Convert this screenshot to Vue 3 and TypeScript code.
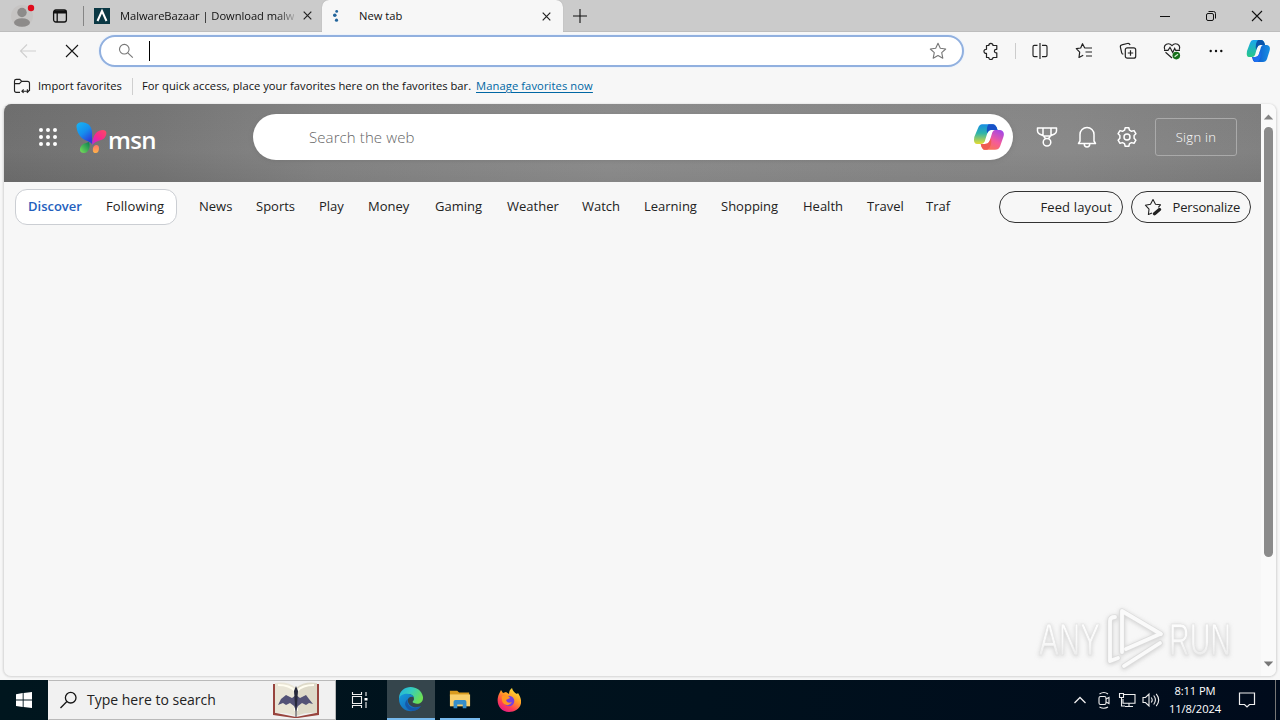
<script setup lang="ts">
interface Topic { label: string; width: number }

const topics: Topic[] = [
  { label: 'News', width: 33 },
  { label: 'Sports', width: 39 },
  { label: 'Play', width: 25 },
  { label: 'Money', width: 43 },
  { label: 'Gaming', width: 48 },
  { label: 'Weather', width: 51 },
  { label: 'Watch', width: 38 },
  { label: 'Learning', width: 53 },
  { label: 'Shopping', width: 58 },
  { label: 'Health', width: 40 },
  { label: 'Travel', width: 35 },
  { label: 'Traf', width: 25 },
]
const dots = [0, 1, 2, 3, 4, 5, 6, 7, 8]
</script>

<template>
  <div class="screen">
    <header class="tabs">
      <div class="profile">
        <svg width="26" height="24" viewBox="0 0 26 24"><circle cx="13" cy="12" r="11" fill="#c6c4c3"/><circle cx="13" cy="8.5" r="4.7" fill="#8d8b8a"/><ellipse cx="13" cy="18.5" rx="8" ry="4.3" fill="#8d8b8a"/><circle cx="22" cy="4" r="3.2" fill="#e00b1c"/></svg>
      </div>
      <div class="workspaces">
        <svg width="16" height="16" viewBox="0 0 16 16" fill="none" stroke="#111" stroke-width="1.3"><rect x="1.6" y="2" width="12.8" height="12" rx="2.2"/><path d="M2 4h12" stroke-width="3"/><path d="M5.2 4v10"/></svg>
      </div>
      <i class="tabsep"></i>
      <div class="tab old">
        <svg width="16" height="16" viewBox="0 0 16 16"><path fill="#0b3844" d="M0 0h16v16H0z"/><path d="M3.5 13 8 3l4.5 10" fill="none" stroke="#fff" stroke-width="2"/></svg>
        <span class="title fade">MalwareBazaar | Download malw</span>
        <svg class="x" width="9" height="9" viewBox="0 0 9 9"><path d="M.7.7l7.6 7.6M8.3.7L.7 8.3" stroke="#222" stroke-width="1.2"/></svg>
      </div>
      <div class="tab active">
        <svg width="16" height="16" viewBox="0 0 16 16" fill="#23659c"><circle cx="4.7" cy="3.4" r="1.4"/><circle cx="2.8" cy="7.2" r="1.8" /><circle cx="4.5" cy="12.2" r="1.6"/></svg>
        <span class="title">New tab</span>
        <svg class="x" width="9" height="9" viewBox="0 0 9 9"><path d="M.7.7l7.6 7.6M8.3.7L.7 8.3" stroke="#222" stroke-width="1.2"/></svg>
      </div>
      <svg class="plus" width="14" height="14" viewBox="0 0 14 14"><path d="M7 0v14M0 7h14" stroke="#111" stroke-width="1.1"/></svg>
      <div class="winbtns">
        <svg width="12" height="12" viewBox="0 0 12 12"><path d="M1 6.5h10" stroke="#111"/></svg>
        <svg width="12" height="12" viewBox="0 0 12 12" fill="none" stroke="#111"><rect x="1.5" y="3.5" width="7" height="7" rx="1.5"/><path d="M3.5 1.5h5q2 0 2 2v5"/></svg>
        <svg width="12" height="12" viewBox="0 0 12 12"><path d="M1 1l10 10M11 1L1 11" stroke="#111" stroke-width="1.1"/></svg>
      </div>
    </header>

    <div class="toolbar">
      <div class="slot first"><svg width="18" height="16" viewBox="0 0 18 16" fill="none" stroke="#cfcfcf" stroke-width="1.1"><path d="M17 8H1.5M8 1.5 1.5 8 8 14.5"/></svg></div>
      <div class="slot"><svg width="14" height="14" viewBox="0 0 14 14"><path d="M1 1l12 12M13 1L1 13" stroke="#151515" stroke-width="1.1"/></svg></div>
      <div class="address">
        <svg width="16" height="16" viewBox="0 0 16 16" fill="none" stroke="#777" stroke-width="1.1"><circle cx="6.3" cy="6.2" r="4.8"/><path d="m9.8 9.8 5 4.8"/></svg>
        <i class="caret"></i>
        <svg class="star" width="18" height="18" viewBox="0 0 18 18" fill="none" stroke="#777" stroke-width="1.1" stroke-linejoin="round"><path d="m9 1.3 2.3 5 5.4.7-4 3.7 1.1 5.5L9 13.5l-4.8 2.7 1.1-5.5-4-3.7 5.4-.7z"/></svg>
      </div>
      <div class="slot ext"><svg width="18" height="18" viewBox="0 0 18 18" fill="none" stroke="#222" stroke-width="1.2" stroke-linejoin="round"><path d="M4.5 3.5h2.3a2.1 2.1 0 0 1 4.2 0h3.8v3.8h-.6a1.8 1.8 0 0 0 0 3.6h.6v4.6H11a2.1 2.1 0 0 1-4.2 0H4.5v-4.1a2.1 2.1 0 1 1 0-4.1z"/></svg></div>
      <i class="toolsep"></i>
      <div class="slot split"><svg width="18" height="18" viewBox="0 0 18 18" fill="none" stroke="#222" stroke-width="1.15"><path d="M6.5 3.4H3.3Q2 3.4 2 4.7v8.6q0 1.3 1.3 1.3h3.2M11 3.4h3.7q1.3 0 1.3 1.3v8.6q0 1.3-1.3 1.3H11M9 1v16"/></svg></div>
      <div class="slot"><svg width="18" height="18" viewBox="0 0 18 18" fill="none" stroke="#222" stroke-width="1.2" stroke-linejoin="round"><path d="m13.2 6-3.6-.2L7.5 1.7 5.7 6l-4.4.7 3.4 3.4L4 15.5l4.2-2.3M11.5 6H17M10.5 10H17M11 14h6"/></svg></div>
      <div class="slot"><svg width="18" height="18" viewBox="0 0 18 18" fill="none" stroke="#222" stroke-width="1.2"><rect x="6.3" y="5.8" width="10.4" height="10.4" rx="2"/><path d="M11.5 8.3v5.4M8.8 11h5.4M4.3 12.2Q3 12 2.7 10.8L1.4 5.2Q1 3.3 2.8 2.9l5.5-1.4q2-.5 2.8 1.5"/></svg></div>
      <div class="slot"><svg width="18" height="18" viewBox="0 0 18 18" fill="none" stroke="#222" stroke-width="1.15"><path d="M1.8 7.4C-.1 3 5.5-.4 9 3.7c3.5-4.1 9.1-.7 7.2 3.7M1 8.4h4l2-3 2.7 5 2-4 1 2H17M2.5 10.3 9 16"/><circle cx="13.3" cy="13.6" r="3.8" fill="#16701b" stroke="none"/><path d="m11.6 14.8 3.4-2.6" stroke="#d8efd8"/></svg></div>
      <div class="slot"><svg width="18" height="18" viewBox="0 0 18 18" fill="#111"><circle cx="3.7" cy="9" r="1.2"/><circle cx="9" cy="9" r="1.2"/><circle cx="14.3" cy="9" r="1.2"/></svg></div>
      <svg class="copilot" width="24" height="24" viewBox="0 0 24 24"><defs><linearGradient id="ca" x2="0" y2="1"><stop stop-color="#19a5ee"/><stop offset="1" stop-color="#27c887"/></linearGradient><linearGradient id="cb" x2="1" y2="0"><stop stop-color="#0d4acb"/><stop offset="1" stop-color="#168fe2"/></linearGradient></defs><path d="M7 1h8q3 0 4 5h-5q-2 0-3 3l-2 7q-1 2-3 2H3q-3 0-2-6L4 4q1-3 3-3z" fill="url(#ca)"/><path d="M12 1h3q3 0 4 5h-5q-2 0-3 3l-1 2q-1-7 2-10z" fill="#0954aa"/><path d="M17 6h4q4 1 2.5 6L21 20q-1 3-4 3H9q-2 0-3-5h3q3 0 4-3l2-7q1-2 2-2z" fill="url(#cb)"/><path d="M7 18h2q3 0 4-3l1-3q2 6-2 11H9q-2-1-2-5z" fill="#1c6ff0"/></svg>
    </div>

    <div class="bookmarks">
      <svg width="18" height="18" viewBox="0 0 18 18" fill="none" stroke="#222" stroke-width="1.15"><path d="M7 15.3H3.3q-1.8 0-1.8-1.8V4.2q0-1.8 1.8-1.8h3.5l2 2h5.7q2 0 2 2V14M1.6 6.6h4.8l2.2-2.2M9 14.2h6.4M10.6 12.5l-1.7 1.7 1.7 1.7M13.9 12.5l1.7 1.7-1.7 1.7"/></svg>
      <span class="import">Import favorites</span><i></i>
      <span class="hint">For quick access, place your favorites here on the favorites bar.</span>
      <a>Manage favorites now</a>
    </div>

    <main class="page">
      <div class="content">
        <div class="hero">
          <svg class="waffle" width="20" height="20" viewBox="0 0 20 20" fill="#fff"><circle v-for="d in dots" :key="d" :cx="3 + (d % 3) * 7" :cy="3 + Math.floor(d / 3) * 7" r="2"/></svg>
          <svg class="fly" width="32" height="32" viewBox="0 0 32 32"><defs><linearGradient id="w1" x2=".6" y2="1"><stop stop-color="#18b6f2"/><stop offset=".55" stop-color="#168eed"/><stop offset="1" stop-color="#2b3edb"/></linearGradient><linearGradient id="w2" x1="1" x2="0" y2="1"><stop stop-color="#ff4b62"/><stop offset=".5" stop-color="#f72a8c"/><stop offset="1" stop-color="#bd23e4"/></linearGradient><linearGradient id="w3" x1="1" x2="0" y2="1"><stop stop-color="#087b50"/><stop offset="1" stop-color="#7ce35b"/></linearGradient><linearGradient id="w4" x2="0" y2="1"><stop stop-color="#ff7468"/><stop offset="1" stop-color="#ffb447"/></linearGradient></defs><path d="M.5 5C0-1 10-1 14 4c3 4 2 10 2 18-2-3-8-3-12-8C2 11 1 9 .5 5z" fill="url(#w1)"/><path d="M16.2 23C16.500 13 21 8 27 8c4 0 4.500 4 1.500 8-3 3-8.500 2-12.300 7z" fill="url(#w2)"/><path d="M13 20c2 6-1 11-5 11-5 0-5-5-2-8 2-2 5-2 7-3z" fill="url(#w3)"/><path d="M17 26c1-4 6-4 6 0 0 3-1 5-3.500 5C17 31 16.500 29 17 26z" fill="url(#w4)"/></svg>
          <b class="msn">msn</b>
          <div class="search"><span>Search the web</span>
            <svg width="31" height="28" viewBox="0 0 24 24" preserveAspectRatio="none"><defs><linearGradient id="cc" x2="0" y2="1"><stop stop-color="#168de5"/><stop offset=".45" stop-color="#2eb4aa"/><stop offset="1" stop-color="#e7dc31"/></linearGradient><linearGradient id="cd" x1=".8" x2=".2" y2="1"><stop stop-color="#a448e5"/><stop offset=".5" stop-color="#f45b9a"/><stop offset="1" stop-color="#fa7947"/></linearGradient></defs><path d="M7 1h8q3 0 4 5h-5q-2 0-3 3l-2 7q-1 2-3 2H3q-3 0-2-6L4 4q1-3 3-3z" fill="url(#cc)"/><path d="M12 1h3q3 0 4 5h-5q-2 0-3 3-1-5 1-8z" fill="#1851c8"/><path d="M17 6h4q4 1 2.500 6L21 20q-1 3-4 3H9q-2 0-3-5h3q3 0 4-3l2-7q1-2 2-2z" fill="url(#cd)"/><path d="M6 18h3q3 0 4-3l1-2q1 7-3 10H9q-2 0-3-5z" fill="#ef5c52"/></svg>
          </div>
          <svg class="heroicon" width="24" height="24" viewBox="0 0 24 24" fill="none" stroke="#fff" stroke-width="1.5" stroke-linejoin="round"><path d="M2.500 3h19v3q0 2-2 3L15 11H9L4.500 9q-2-1-2-3zM8 3v7.500l2.500 3M16 3v7.500l-2.500 3"/><circle cx="12" cy="17.300" r="3.800"/></svg>
          <svg class="heroicon" width="24" height="24" viewBox="0 0 24 24" fill="none" stroke="#fff" stroke-width="1.5" stroke-linejoin="round"><path d="M5 16V9.500a7 7 0 0 1 14 0V16l1.500 2.500h-17zM9.300 19.200a2.700 2.700 0 0 0 5.400 0"/></svg>
          <svg class="heroicon" width="24" height="24" viewBox="0 0 24 24" fill="none" stroke="#fff" stroke-width="1.5" stroke-linejoin="round"><path d="m9.500 5.200.7-2.500h3.600l.7 2.500 2 1.100 2.500-.7 1.900 3.100-1.800 1.900v2.700l1.800 1.900-1.900 3.100-2.500-.7-2 1.100-.7 2.500h-3.600l-.7-2.500-2-1.100-2.500.7-1.900-3.100 1.800-1.900v-2.700L3.100 8.700 5 5.600l2.500.7z"/><circle cx="12" cy="12" r="3"/></svg>
          <button>Sign in</button>
        </div>
        <nav>
          <div class="feed"><b>Discover</b><span>Following</span></div>
          <div class="topics"><span v-for="t in topics" :key="t.label" :style="{ width: t.width + 'px' }">{{ t.label }}</span></div>
          <div class="pill layout">Feed layout</div>
          <div class="pill personal"><svg width="18" height="18" viewBox="0 0 18 18" fill="none" stroke="#222" stroke-width="1.1" stroke-linejoin="round"><path d="m8 15-3.600 1.500.6-5.300-3.600-4 5.100-.9L9 1.500l2.500 4.800 5 .5-2.200 2.500"/><path d="m10.500 15.700 5-4.200" stroke-width="3.300" stroke-linecap="round"/></svg>Personalize</div>
        </nav>
      </div>
      <aside><svg width="11" height="6" viewBox="0 0 11 6"><path d="m.8 5.500 4.700-5 4.700 5z" fill="#858585"/></svg><div class="thumb"></div><svg class="down" width="11" height="6" viewBox="0 0 11 6"><path d="m.8.5 4.700 5 4.700-5z" fill="#777"/></svg></aside>
      <svg class="mark" width="204" height="70" viewBox="0 0 204 70">
        <defs><linearGradient id="mg" x2="0" y2="1"><stop stop-color="#fff"/><stop offset=".55" stop-color="#f9f9f9"/><stop offset="1" stop-color="#e2e2e2"/></linearGradient></defs>
        <g class="marktext" fill="url(#mg)"><text x="5" y="51" textLength="61" lengthAdjust="spacingAndGlyphs">ANY</text><text x="135" y="51" textLength="62" lengthAdjust="spacingAndGlyphs">RUN</text></g>
        <g fill="none" stroke-linejoin="round" stroke-linecap="round"><path d="M88 48V7l39 23M92 45l34-15M76 57V17q0-4 5-4M76 57l8-3M90 62l36-23" stroke="#dcdcdc" stroke-width="5.500"/><path d="M88 48V7l39 23M92 45l34-15M76 57V17q0-4 5-4M76 57l8-3M90 62l36-23" stroke="#fafafa" stroke-width="3.800"/></g>
      </svg>
    </main>

    <footer>
      <div class="start"><svg width="16" height="16" viewBox="0 0 16 16" fill="#fff"><path d="M0 2.200 6.700 1v6.500H0zM7.600.9 16 0v7.500H7.600zM0 8.400h6.700v6.500L0 14zM7.600 8.400H16V16l-8.400-1.100z"/></svg></div>
      <div class="winsearch">
        <svg width="18" height="18" viewBox="0 0 18 18" fill="none" stroke="#151515" stroke-width="1.3"><circle cx="10.700" cy="6.700" r="5.300"/><path d="M6.900 10.500.5 17"/></svg><span>Type here to search</span>
        <svg class="book" width="48" height="38" viewBox="0 0 48 38"><path d="M1 3h3v29l20 4 20-4V3h3v31l-21 3h-4L1 34z" fill="#98443d"/><path d="M3 2q13-2 21 5v28Q14 31 3 32z" fill="#e9e5d6"/><path d="M45 2Q32 0 24 7v28q10-4 21-3z" fill="#dedac9"/><path d="M6 4q12 0 17 6v20M42 4Q30 4 25 10v20" fill="none" stroke="#fffdf0" stroke-width="2"/><path d="M24 7V36" stroke="#77747c" stroke-width="1.5"/><path d="m24 14 4 3 6-3 3 4 4 5-4-1-3 2-4-2-4 3-2 5-2-5-4-3-4 2-3-2-5 2 3-6 5-4 6 3z" fill="#535276"/><path d="m24 5 2 5-1 14-1 7-1-7-1-14z" fill="#26283a"/></svg>
      </div>
      <div class="app view"><svg width="18" height="18" viewBox="0 0 18 18" fill="none" stroke="#eee" stroke-width="1.1"><path d="M1.500 1v2.500h9V1M1.500 17v-2.500h9V17M1.500 5.500h9v7h-9zM15 1v4M15 11v6"/><path d="M13.500 7h3v2.500h-3z" fill="#fff" stroke="none"/></svg></div>
      <div class="app edge"><svg width="26" height="26" viewBox="0 0 26 26"><defs><linearGradient id="eg" x2="1" y2=".5"><stop stop-color="#1eaee5"/><stop offset=".5" stop-color="#36cdbd"/><stop offset="1" stop-color="#6bdf55"/></linearGradient><linearGradient id="eb" x2="1" y2="1"><stop stop-color="#159bdc"/><stop offset="1" stop-color="#155aae"/></linearGradient></defs><path d="M1 12C2-3 23-2 25 11c.5 6-5 8-9 6-3-1 0-2 0-4 0-5-6-6-10-4-3 1-5 3-5 7z" fill="url(#eg)"/><path d="M1 13c1-6 12-7 15-2-5-1-7 2-6 5 2 6 9 6 13 4-6 9-22 6-22-7z" fill="url(#eb)"/><path d="M10 13c-3 6 6 13 13 7-4 6-11 6-14 2-3-3-2-7 1-9z" fill="#1658a9"/></svg></div>
      <div class="app explorer"><svg width="22" height="20" viewBox="0 0 24 20"><path d="M1 1h8l2 2h11v4H1z" fill="#d99b1f"/><path d="M1 5h22v13H1z" fill="#f9cf6b"/><path d="M5 20v-7q0-2 2-2h10q2 0 2 2v7h-4v-4H9v4z" fill="#358ec9"/></svg></div>
      <div class="app fox"><svg width="24" height="24" viewBox="0 0 24 24"><defs><linearGradient id="fg" x1=".9" x2=".3" y2="1"><stop stop-color="#fff23e"/><stop offset=".45" stop-color="#ff9b25"/><stop offset=".75" stop-color="#ff4052"/><stop offset="1" stop-color="#e51b83"/></linearGradient></defs><path d="M2 6 4 2l2 3 3-1 3 2q0-4 3-6 1 4 5 6l1-1c8 12-1 19-9 19C3 24-2 15 2 6z" fill="url(#fg)"/><circle cx="12" cy="13" r="5.300" fill="#7540df"/><path d="M5 8q6-2 8 2l-4 2q1 4 6 2-3 5-8 2-3-3-2-8z" fill="#ff961f"/></svg></div>
      <div class="tray">
        <svg width="14" height="10" viewBox="0 0 14 10"><path d="m1.500 8 5.500-5.500L12.500 8" fill="none" stroke="#eee" stroke-width="1.3"/></svg>
        <svg width="16" height="18" viewBox="0 0 16 18" fill="none" stroke="#eee" stroke-width="1.1"><rect x="3" y="5.500" width="7" height="8" rx="1.500"/><path d="m10 8 3-1.500v6L10 11M3.500 3Q8 0 12 3M3.500 16q4.500 2.500 8.500 0"/></svg>
        <svg width="18" height="16" viewBox="0 0 18 16" fill="none" stroke="#eee" stroke-width="1.1"><path d="M6 2.500h11v8.800H5V7M11 11.300v3M7 14.500h8M1.500 1.500h4v4h-4zM3.500 5.500V14H7"/></svg>
        <svg width="18" height="16" viewBox="0 0 18 16" fill="none" stroke="#eee" stroke-width="1.1"><path d="M1 5.500h2.500L7 2v12l-3.500-3.500H1zM9.200 5.500q2 2.500 0 5M11.700 3.500q3.400 4.500 0 9M14.200 1.800q5 6.200 0 12.400"/></svg>
        <time><span>8:11 PM</span><span>11/8/2024</span></time>
        <svg class="note" width="18" height="18" viewBox="0 0 18 18" fill="none" stroke="#eee" stroke-width="1.2"><path d="M1.500 2h15v11.500h-5L9 16l-2.500-2.500h-5z"/></svg>
        <i></i>
      </div>
    </footer>
  </div>
</template>

<style>
html, body { margin: 0; overflow: hidden; }
</style>
<style scoped>
* { box-sizing: border-box; }
.screen { width: 1280px; height: 720px; background: #f7f7f7; font: 11.2px/16px "Open Sans", "Noto Sans", sans-serif; color: #111; overflow: hidden; display: flex; flex-direction: column; white-space: nowrap; }
svg { flex: none; display: block; }
.tabs { height: 32px; flex: none; background: #cbcbcb; border-bottom: 1px solid #bdbdbd; display: flex; align-items: center; }
.profile { width: 48px; padding-left: 9px; }
.workspaces { width: 35px; padding-left: 4px; }
.tabsep { width: 1px; height: 20px; background: #858585; }
.tab { display: flex; align-items: center; height: 32px; }
.old { width: 238px; padding-left: 10px; }
.title { margin-left: 10px; font-size: 11.2px; }
.old .title { width: 174px; letter-spacing: -.07px; }
.fade { mask-image: linear-gradient(90deg, #000 90%, #0003 100%); }
.old .x { margin-left: 9px; }
.active { width: 241px; background: #f7f7f7; border-radius: 7px 7px 0 0; padding-left: 10px; align-self: flex-start; box-shadow: 0 0 1px #999; clip-path: inset(0 -2px 0 -2px); }
.active .title { margin-left: 11px; width: 174px; }
.active .x { margin-left: 9px; }
.plus { margin-left: 10px; }
.winbtns { margin-left: auto; display: flex; gap: 34px; padding-right: 17px; }
.toolbar { height: 38px; flex: none; display: flex; align-items: center; }
.slot { width: 44px; height: 38px; display: flex; align-items: center; justify-content: center; }
.first { margin-left: 6px; }
.address { margin-left: 5px; width: 865px; height: 32px; background: #fff; border: 2px solid #91b0df; border-radius: 16px; padding: 0 15px 0 17px; display: flex; align-items: center; box-shadow: 0 0 0 1px #edf3fb; }
.caret { width: 1px; height: 20px; background: #000; margin-left: 15px; }
.star { margin-left: auto; }
.ext { margin-left: 5px; }
.toolsep { width: 1px; height: 16px; margin-left: 2px; background: #ccc; }
.split { margin-left: 2px; }
.copilot { margin-left: 8px; }
.bookmarks { height: 34px; flex: none; display: flex; align-items: center; padding: 0 0 2px 13px; }
.import { margin-left: 7px; width: 85px; }
.bookmarks i { width: 1px; height: 17px; background: #cfcfcf; margin: 0 9px; }
.bookmarks a { margin-left: 5px; color: #0067a4; letter-spacing: .09px; text-decoration: underline; text-underline-offset: 2px; }
.hint { width: 329px; letter-spacing: .02px; }
.page { position: relative; height: 573px; flex: none; width: 1274px; margin-left: 3px; border: 1px solid #dedede; border-top: 0; border-radius: 8px; overflow: hidden; display: flex; box-shadow: 0 0 2px #ccc; }
.content { width: 1257px; }
.hero { height: 78px; background: linear-gradient(180deg, rgba(0,0,0,.02), rgba(255,255,255,.01) 60%, rgba(0,0,0,.06)), linear-gradient(90deg, #707070, #777 12%, #858585 25%, #8e8e8e 48%, #8b8b8b 65%, #888 85%, #808080); display: flex; align-items: flex-start; color: #fff; }
.waffle { margin: 23px 0 0 34px; }
.fly { margin: 18px 0 0 18px; }
.msn { font: 600 24px/30px "Open Sans", sans-serif; letter-spacing: -.7px; width: 49px; margin: 21px 0 0; }
.search { margin: 10px 0 0 96px; width: 760px; height: 46px; border-radius: 23px; background: #fff; display: flex; align-items: center; padding: 0 9px 0 56px; justify-content: space-between; box-shadow: 0 1px 4px #6666; color: #666; font: 300 15px/22px "Open Sans", sans-serif; }
.search span { letter-spacing: .1px; }
.heroicon { margin: 21px 0 0 22px; }
.heroicon + .heroicon { margin-left: 16px; }
button { width: 82px; height: 38px; margin: 14px 0 0 16px; background: transparent; border: 1px solid #aaa; border-radius: 3px; color: #fff; font: 300 13px/18px "Open Sans", sans-serif; letter-spacing: .3px; padding: 0; }
nav { height: 50px; display: flex; align-items: center; font-size: 13px; color: #222; }
.feed { width: 162px; height: 36px; margin-left: 11px; border: 1px solid #cbced3; border-radius: 12px; background: #fff; display: flex; align-items: center; padding: 0 0 2px 12px; }
.feed b { color: #2460bd; font-weight: 600; width: 78px; font-size: 13px; }
.feed span { letter-spacing: .1px; }
.topics { display: flex; gap: 24px; margin-left: 22px; width: 800px; padding-bottom: 2px; }
.topics span { flex: none; }
.pill { height: 32px; border: 1px solid #333; border-radius: 16px; display: flex; align-items: center; justify-content: flex-end; padding-right: 10px; flex: none; }
.layout { width: 124px; letter-spacing: .14px; }
.personal { width: 120px; margin-left: 8px; gap: 11px; letter-spacing: -.2px; }
aside { width: 15px; background: #fafafa; display: flex; flex-direction: column; align-items: center; padding-top: 10px; }
.thumb { width: 9px; height: 430px; margin-top: 7px; border-radius: 5px; background: #8b8b8b; }
.down { margin-top: 104px; }
.mark { position: absolute; right: 38px; bottom: 2px; overflow: visible; filter: drop-shadow(0 1px 2px #aaa8); }
.marktext { font: 400 45px "Liberation Sans", sans-serif; stroke: #e0e0e0; stroke-width: .6; }
footer { height: 40px; margin-top: 3px; flex: none; background: linear-gradient(90deg, #00161e, #00111d 55%, #000b1c); display: flex; }
.start { width: 48px; display: flex; align-items: center; justify-content: center; }
.winsearch { width: 288px; background: #f1f1f1; border: 1px solid #b9b9b9; border-left-color: #f1f1f1; display: flex; align-items: center; padding-left: 11px; font-size: 14px; color: #222; }
.winsearch span { margin-left: 9px; }
.book { margin-left: auto; margin-right: 15px; }
.app { height: 40px; display: flex; align-items: center; justify-content: center; }
.view { width: 48px; }
.edge { width: 48px; margin-left: 3px; background: #35454c; border-bottom: 2px solid #76b9ed; }
.explorer { width: 40px; margin-left: 5px; border-bottom: 2px solid #76b9ed; }
.fox { width: 48px; margin-left: 5px; }
.tray { margin-left: auto; display: flex; align-items: center; color: #fff; }
.tray > svg { margin-right: 6px; }
.tray > svg:first-child { margin-right: 9px; }
time { width: 58px; display: flex; flex-direction: column; align-items: center; line-height: 18px; font-size: 11.2px; letter-spacing: -.1px; margin: 0 14px 0 0; }
.tray .note { margin-right: 19px; }
.tray i { width: 1px; height: 40px; background: #777; margin-right: 4px; }
</style>
